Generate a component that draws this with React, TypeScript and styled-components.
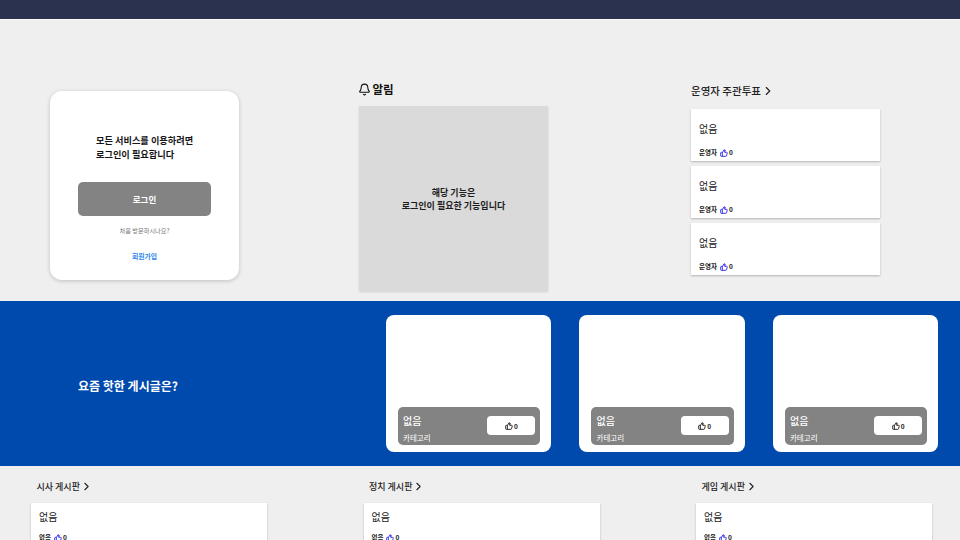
import React from "react";
import styled, { createGlobalStyle } from "styled-components";
import { Bell, ChevronRight, ThumbsUp } from "lucide-react";

const Global = createGlobalStyle`
  html, body { margin: 0; padding: 0; height: 540px; overflow: hidden; background: #efefef; }
  * { box-sizing: border-box; }
  body { font-family: "Noto Sans CJK KR", "Noto Sans", sans-serif; color: #111; }
`;
const Page = styled.div`width: 960px; height: 540px; overflow: hidden; background: #efefef;`;
const Header = styled.header`height: 19px; background: #2a3250;`;
const Divider = styled.div`height: 1px; background: #fafafa;`;
const TopRow = styled.section`height: 281px; display: flex; align-items: flex-start; padding-left: 50px;`;
const LoginCard = styled.div`
  width: 189px; height: 189px; margin-top: 71px; background: #fff; border-radius: 12px;
  box-shadow: 0 1px 4px rgba(0,0,0,.2); display: flex; flex-direction: column; align-items: center; padding-top: 43px;
`;
const LoginText = styled.p`
  margin: 0; width: 97px; font-size: 9.2px; line-height: 13.5px; font-weight: 700; white-space: nowrap; color: #151515;
`;
const LoginButton = styled.button`
  margin-top: 21px; width: 133px; height: 34px; border: 0; border-radius: 5px; background: #838383; color: #fff;
  font: 700 8.5px "Noto Sans CJK KR", sans-serif;
`;
const Visit = styled.div`margin-top: 9px; font-size: 6.2px; line-height: 11px; color: #777;`;
const Join = styled.a`margin-top: 15px; font-size: 6.8px; line-height: 11px; font-weight: 700; color: #2c86f0;`;
const NoticeColumn = styled.div`width: 189px; margin-left: 120px; margin-top: 60px;`;
const NoticeTitle = styled.h2`
  margin: 0 0 0 -1px; height: 26px; padding-bottom: 8px; display: flex; align-items: center; gap: 1.5px; font-size: 11.5px; font-weight: 700;
`;
const NoticePanel = styled.div`
  width: 189px; height: 185px; padding-top: 1px; background: #dadada; box-shadow: 0 1px 2px rgba(0,0,0,.12);
  display: flex; align-items: center; justify-content: center; text-align: center;
  font-size: 9px; font-weight: 700; line-height: 13px; color: #1c1c1c;
`;
const VoteColumn = styled.div`width: 189px; margin-left: 143px; margin-top: 63px;`;
const SectionTitle = styled.h3<{ $h: number; $size: number }>`
  margin: 0; height: ${p => p.$h}px; display: flex; align-items: flex-start; font-size: ${p => p.$size}px; line-height: 16px; font-weight: 500; color: #222;
  svg { margin: 1px 0 0 0; }
`;
const PostStack = styled.div`display: flex; flex-direction: column; gap: 5px;`;
const PostCard = styled.article<{ $pad: number }>`
  height: 52px; background: #fff; box-shadow: 0 1px 2px rgba(0,0,0,.25);
  padding: ${p => p.$pad}px 8px 0;
`;
const WideCard = styled(PostCard)`width: 236px;`;
const PostTitle = styled.div`font-size: 10px; line-height: 15px; color: #222;`;
const Meta = styled.div<{ $top: number }>`
  margin-top: ${p => p.$top}px; display: flex; align-items: center; font-size: 6.5px; line-height: 9px; font-weight: 700; color: #222;
  svg { margin-left: 3px; margin-right: 1px; color: #2f2fe8; }
`;
const HotSection = styled.section`
  height: 165px; background: #004aad; display: flex; align-items: flex-start; padding-top: 14px;
`;
const HotTitle = styled.h2`
  margin: 62px 0 0 78px; width: 308px; font-size: 12px; line-height: 17px; font-weight: 700; color: #fff; flex-shrink: 0;
`;
const HotCards = styled.div`display: flex; gap: 28.2px;`;
const HotCard = styled.article`
  width: 165.3px; height: 137px; background: #fff; border-radius: 8px; padding: 92px 11px 0 12px;
`;
const HotInfo = styled.div`
  height: 38px; background: #838383; border-radius: 5px; padding: 0 5px; display: flex; justify-content: space-between; color: #fff;
`;
const HotText = styled.div`display: flex; flex-direction: column;`;
const HotName = styled.div`margin-top: 6px; font-size: 10px; line-height: 15px; font-weight: 500;`;
const HotCat = styled.div`margin-top: 4px; font-size: 7.5px; line-height: 11px;`;
const LikeBox = styled.div`
  margin: 9px 0 0 0; width: 48px; height: 19px; background: #fff; border-radius: 4px; color: #222;
  display: flex; align-items: center; justify-content: center; gap: 1px; font-size: 6.5px; font-weight: 700;
`;
const BoardRow = styled.section`display: flex; gap: 96.5px; padding: 13px 0 0 31px;`;
const BoardColumn = styled.div`width: 236px;`;
const BoardHead = styled.div`padding-left: 5.5px;`;

const boards = ["시사 게시판", "정치 게시판", "게임 게시판"];

export default function App() {
  return (
    <Page>
      <Global />
      <Header />
      <Divider />
      <TopRow>
        <LoginCard>
          <LoginText>모든 서비스를 이용하려면<br />로그인이 필요합니다</LoginText>
          <LoginButton>로그인</LoginButton>
          <Visit>처음 방문하시나요?</Visit>
          <Join>회원가입</Join>
        </LoginCard>
        <NoticeColumn>
          <NoticeTitle><Bell size={13} strokeWidth={2} />알림</NoticeTitle>
          <NoticePanel><div>해당 기능은<br />로그인이 필요한 기능입니다</div></NoticePanel>
        </NoticeColumn>
        <VoteColumn>
          <SectionTitle $h={26} $size={10.5}>운영자 주관투표<ChevronRight size={14} strokeWidth={2} /></SectionTitle>
          <PostStack>
            {[0, 1, 2].map(i => (
              <PostCard key={i} $pad={12}>
                <PostTitle>없음</PostTitle>
                <Meta $top={12}>운영자<ThumbsUp size={8} strokeWidth={2.8} />0</Meta>
              </PostCard>
            ))}
          </PostStack>
        </VoteColumn>
      </TopRow>
      <HotSection>
        <HotTitle>요즘 핫한 게시글은?</HotTitle>
        <HotCards>
          {[0, 1, 2].map(i => (
            <HotCard key={i}>
              <HotInfo>
                <HotText>
                  <HotName>없음</HotName>
                  <HotCat>카테고리</HotCat>
                </HotText>
                <LikeBox><ThumbsUp size={8} strokeWidth={2.8} />0</LikeBox>
              </HotInfo>
            </HotCard>
          ))}
        </HotCards>
      </HotSection>
      <BoardRow>
        {boards.map(b => (
          <BoardColumn key={b}>
            <BoardHead><SectionTitle $h={24} $size={9}>{b}<ChevronRight size={13} strokeWidth={2} /></SectionTitle></BoardHead>
            <WideCard $pad={6}>
              <PostTitle>없음</PostTitle>
              <Meta $top={9}>없음<ThumbsUp size={8} strokeWidth={2.8} />0</Meta>
            </WideCard>
          </BoardColumn>
        ))}
      </BoardRow>
    </Page>
  );
}
